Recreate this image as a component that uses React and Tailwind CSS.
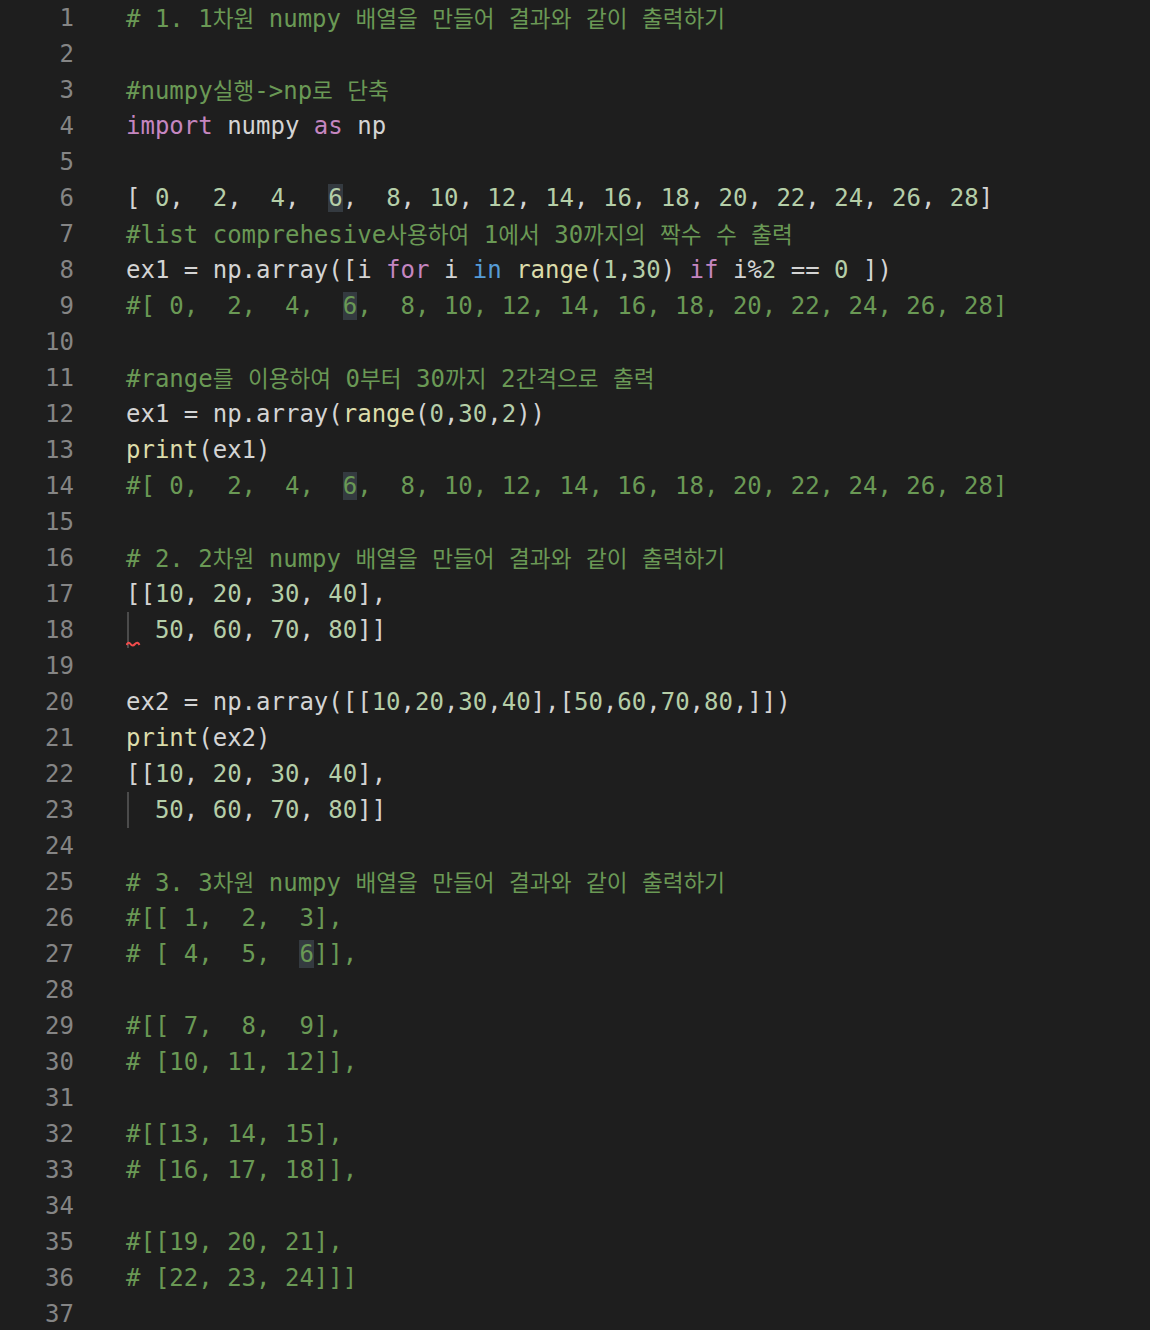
import React from 'react';

// token colours (Dark+)
const C = {
  c: 'text-[#6a9955]', // comment
  t: 'text-[#d4d4d4]', // plain
  n: 'text-[#b5cea8]', // number
  k: 'text-[#c586c0]', // keyword
  b: 'text-[#569cd6]', // in
  f: 'text-[#dcdcaa]', // function
};

// [text, colour, highlighted?]
const lines = [
  [['# 1. 1차원 numpy 배열을 만들어 결과와 같이 출력하기', 'c']],
  [],
  [['#numpy실행->np로 단축', 'c']],
  [['import', 'k'], [' numpy ', 't'], ['as', 'k'], [' np', 't']],
  [],
  [['[ ', 't'], ['0', 'n'], [',  ', 't'], ['2', 'n'], [',  ', 't'], ['4', 'n'], [',  ', 't'], ['6', 'n', true], [',  ', 't'], ['8', 'n'], [', ', 't'], ['10', 'n'], [', ', 't'], ['12', 'n'], [', ', 't'], ['14', 'n'], [', ', 't'], ['16', 'n'], [', ', 't'], ['18', 'n'], [', ', 't'], ['20', 'n'], [', ', 't'], ['22', 'n'], [', ', 't'], ['24', 'n'], [', ', 't'], ['26', 'n'], [', ', 't'], ['28', 'n'], [']', 't']],
  [['#list comprehesive사용하여 1에서 30까지의 짝수 수 출력', 'c']],
  [['ex1 = np.array([i ', 't'], ['for', 'k'], [' i ', 't'], ['in', 'b'], [' ', 't'], ['range', 'f'], ['(', 't'], ['1', 'n'], [',', 't'], ['30', 'n'], [') ', 't'], ['if', 'k'], [' i%', 't'], ['2', 'n'], [' == ', 't'], ['0', 'n'], [' ])', 't']],
  [['#[ 0,  2,  4,  ', 'c'], ['6', 'c', true], [',  8, 10, 12, 14, 16, 18, 20, 22, 24, 26, 28]', 'c']],
  [],
  [['#range를 이용하여 0부터 30까지 2간격으로 출력', 'c']],
  [['ex1 = np.array(', 't'], ['range', 'f'], ['(', 't'], ['0', 'n'], [',', 't'], ['30', 'n'], [',', 't'], ['2', 'n'], ['))', 't']],
  [['print', 'f'], ['(ex1)', 't']],
  [['#[ 0,  2,  4,  ', 'c'], ['6', 'c', true], [',  8, 10, 12, 14, 16, 18, 20, 22, 24, 26, 28]', 'c']],
  [],
  [['# 2. 2차원 numpy 배열을 만들어 결과와 같이 출력하기', 'c']],
  [['[[', 't'], ['10', 'n'], [', ', 't'], ['20', 'n'], [', ', 't'], ['30', 'n'], [', ', 't'], ['40', 'n'], ['],', 't']],
  [['  ', 't'], ['50', 'n'], [', ', 't'], ['60', 'n'], [', ', 't'], ['70', 'n'], [', ', 't'], ['80', 'n'], [']]', 't']],
  [],
  [['ex2 = np.array([[', 't'], ['10', 'n'], [',', 't'], ['20', 'n'], [',', 't'], ['30', 'n'], [',', 't'], ['40', 'n'], ['],[', 't'], ['50', 'n'], [',', 't'], ['60', 'n'], [',', 't'], ['70', 'n'], [',', 't'], ['80', 'n'], [',]])', 't']],
  [['print', 'f'], ['(ex2)', 't']],
  [['[[', 't'], ['10', 'n'], [', ', 't'], ['20', 'n'], [', ', 't'], ['30', 'n'], [', ', 't'], ['40', 'n'], ['],', 't']],
  [['  ', 't'], ['50', 'n'], [', ', 't'], ['60', 'n'], [', ', 't'], ['70', 'n'], [', ', 't'], ['80', 'n'], [']]', 't']],
  [],
  [['# 3. 3차원 numpy 배열을 만들어 결과와 같이 출력하기', 'c']],
  [['#[[ 1,  2,  3],', 'c']],
  [['# [ 4,  5,  ', 'c'], ['6', 'c', true], [']],', 'c']],
  [],
  [['#[[ 7,  8,  9],', 'c']],
  [['# [10, 11, 12]],', 'c']],
  [],
  [['#[[13, 14, 15],', 'c']],
  [['# [16, 17, 18]],', 'c']],
  [],
  [['#[[19, 20, 21],', 'c']],
  [['# [22, 23, 24]]]', 'c']],
  [],
];

// hangul falls back to a wider gothic than the mono cell
function Text({ value }) {
  const parts = value.split(/([\uAC00-\uD7A3]+)/);
  return parts.map((p, i) =>
    /[\uAC00-\uD7A3]/.test(p) ? (
      <span key={i} className="font-['Noto_Sans_CJK_KR',sans-serif] text-[22.6px]">{p}</span>
    ) : (
      p
    )
  );
}

function Squiggle() {
  return (
    <svg className="absolute left-0 top-[28px]" width="15" height="8" viewBox="0 0 15 8">
      <path d="M0.5 5 Q2.5 1 4.5 4 T9 4 T13.5 5" fill="none" stroke="#f14c4c" strokeWidth="2" />
    </svg>
  );
}

export default function App() {
  return (
    <div className="w-[1150px] h-[1330px] overflow-hidden bg-[#1e1e1e] font-['DejaVu_Sans_Mono',monospace] text-[24px] leading-[36px]">
      {lines.map((segs, i) => {
        const num = i + 1;
        const guide = num === 18 || num === 23;
        return (
          <div key={i} className="flex h-[36px]">
            <div className="w-[74px] shrink-0 text-right text-[#858585]">{num}</div>
            <div className="relative ml-[52px] whitespace-pre">
              {guide && <div className="absolute left-[1px] top-0 h-full w-[1.5px] bg-[#4b4b4b]" />}
              {num === 18 && <Squiggle />}
              {segs.map(([text, col, hl], j) => (
                <span key={j} className={`${C[col]} ${hl ? 'bg-[#343a40]' : ''}`}>
                  <Text value={text} />
                </span>
              ))}
            </div>
          </div>
        );
      })}
    </div>
  );
}
